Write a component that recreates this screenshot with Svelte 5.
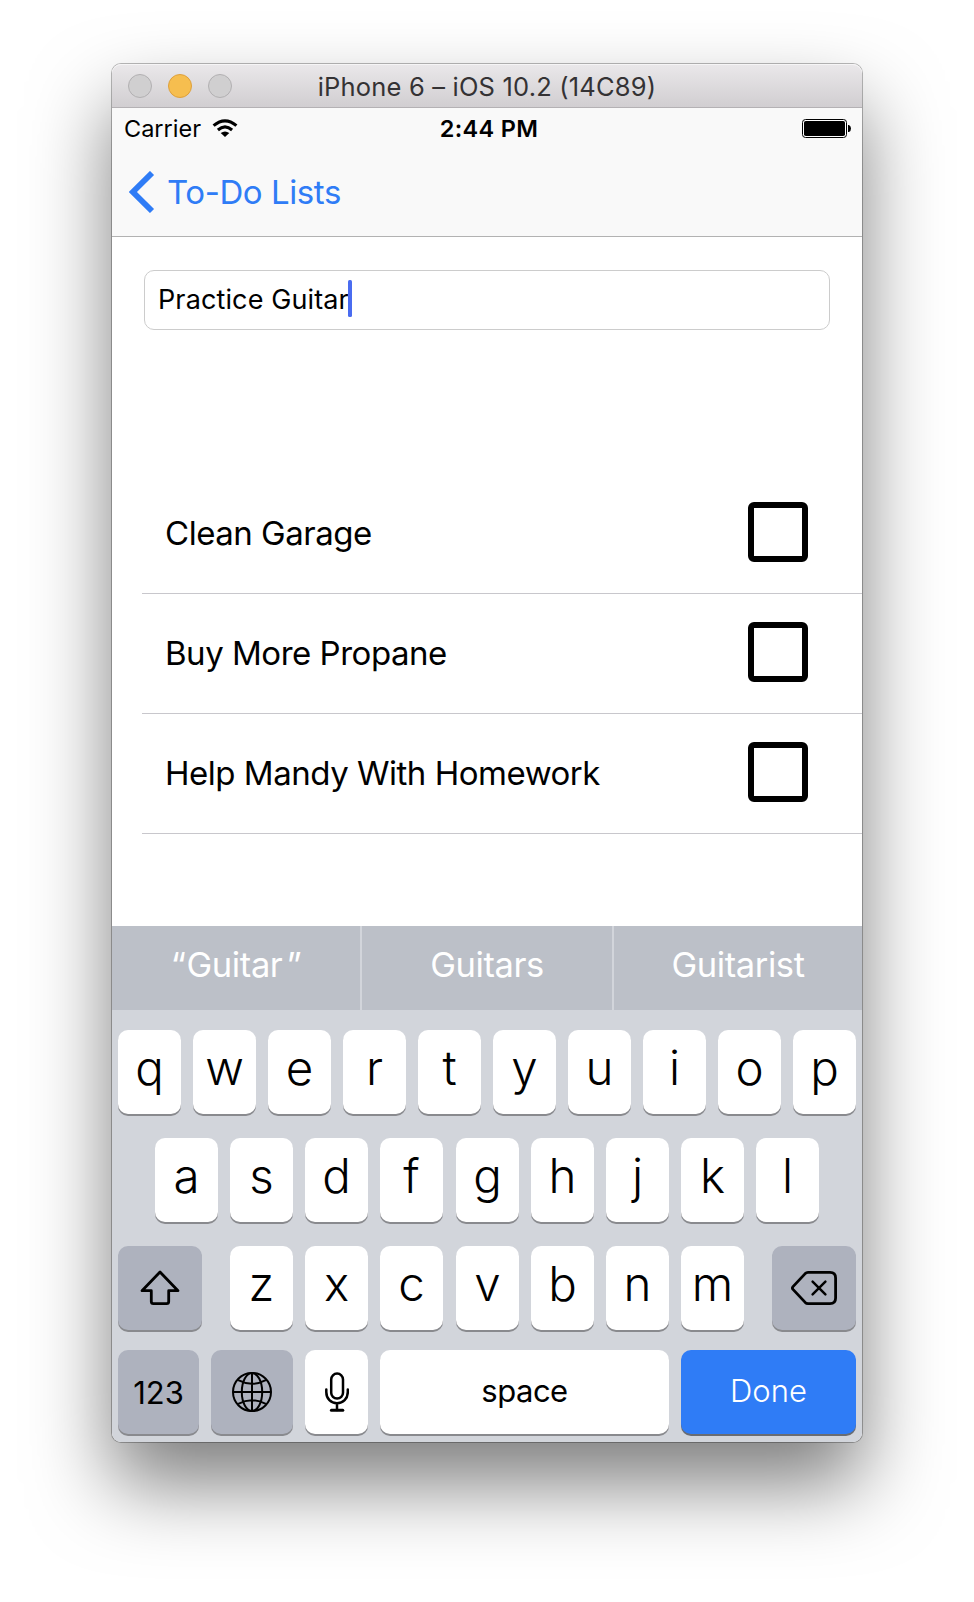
<script>
  const items = ['Clean Garage', 'Buy More Propane', 'Help Mandy With Homework'];
  const top = [...'qwertyuiop'];
  const home = [...'asdfghjkl'];
  const bottom = [...'zxcvbnm'];
</script>

<div class="stage">
  <main class="window">
    <header class="titlebar">
      <div class="lights"><i></i><i class="amber"></i><i></i></div>
      <span class="title">iPhone 6 – iOS 10.2 (14C89)</span>
    </header>

    <section class="top">
      <div class="status">
        <div class="carrier">
          <span>Carrier</span>
          <svg width="26" height="19" viewBox="0 0 26 19" fill="none" stroke="#000">
            <path d="M1.6 6.6 Q13 -3 24.4 6.6" stroke-width="3.2" />
            <path d="M5.9 11 Q13 4.8 20.1 11" stroke-width="3.1" />
            <path d="M13 18 L8.7 14.1 Q13 10.8 17.3 14.1 Z" fill="#000" stroke="none" />
          </svg>
        </div>
        <span class="time">2:44 PM</span>
        <svg class="battery" width="49" height="19" viewBox="0 0 49 19">
          <rect x=".5" y=".5" width="44" height="18" rx="3" fill="#fff" stroke="#000" />
          <rect x="2" y="2" width="41" height="15" rx="1.8" />
          <path d="M46 6 h1 q2 1 2 3.5 t-2 3.5 h-1z" />
        </svg>
      </div>
      <nav>
        <svg width="26" height="42" viewBox="0 0 26 42" fill="none" stroke="#2f7cf6" stroke-width="5.8">
          <path d="M23 2 L3.9 21 L23 40" />
        </svg>
        <span>To-Do Lists</span>
      </nav>
    </section>

    <section class="content">
      <div class="field"><span>Practice Guitar</span><i class="caret"></i></div>
      <ul>
        {#each items as item}
          <li><span class="item">{item}</span><i class="box"></i></li>
        {/each}
      </ul>
    </section>

    <section class="keyboard">
      <div class="suggestions">
        <div><span class="open">“</span><span>Guitar</span><span class="close">”</span></div>
        <div>Guitars</div>
        <div>Guitarist</div>
      </div>
      <div class="row r1">{#each top as k}<b class="key">{k}</b>{/each}</div>
      <div class="row r2">{#each home as k}<b class="key {k}">{k}</b>{/each}</div>
      <div class="row r3">
        <b class="key dark shift">
          <svg width="40" height="36" viewBox="0 0 40 36" fill="none" stroke="#000" stroke-width="2.8" stroke-linejoin="round">
            <path d="M20 2 L2 20.7 H11.3 V31.5 Q11.3 33.6 13.4 33.6 H26.6 Q28.7 33.6 28.7 31.5 V20.7 H38 Z" />
          </svg>
        </b>
        {#each bottom as k}<b class="key {k}">{k}</b>{/each}
        <b class="key dark del">
          <svg width="46" height="34" viewBox="0 0 46 34" fill="none" stroke="#000" stroke-width="2.8" stroke-linejoin="round" stroke-linecap="round">
            <path d="M17 1.4 H39 Q44.6 1.4 44.6 7 V27 Q44.6 32.6 39 32.6 H17 Q15.4 32.6 14.2 31.4 L2 18.4 Q.8 17 2 15.6 L14.2 2.6 Q15.4 1.4 17 1.4 Z" />
            <path d="M21.6 10.6 L34.4 23.4 M34.4 10.6 L21.6 23.4" stroke-width="2.5" />
          </svg>
        </b>
      </div>
      <div class="row r4">
        <b class="key dark num">123</b>
        <b class="key dark globe">
          <svg width="40" height="40" viewBox="0 0 40 40" fill="none" stroke="#000" stroke-width="2">
            <circle cx="20" cy="20" r="19" />
            <ellipse cx="20" cy="20" rx="10.2" ry="19" />
            <path d="M20 1 V39 M1 20 H39 M6.2 8.2 Q20 15.4 33.8 8.2 M6.2 31.8 Q20 24.6 33.8 31.8" />
          </svg>
        </b>
        <b class="key mic">
          <svg width="24" height="40" viewBox="0 0 24 40" fill="none" stroke="#000" stroke-width="2.5" stroke-linecap="round">
            <rect x="6.2" y="1.6" width="11.8" height="25" rx="5.9" />
            <path d="M1.3 17.5 V20 C1.3 27 6 31.2 12 31.2 S22.8 27 22.8 20 V17.5 M12 31.2 V38" />
            <path d="M6.4 38.3 H17.8" stroke-width="3" />
          </svg>
        </b>
        <b class="key space">space</b>
        <b class="key done">Done</b>
      </div>
    </section>
  </main>
</div>

<style>
  :global(body) { margin: 0; background: #fff; }
  .stage {
    width: 974px; height: 1602px; box-sizing: border-box; padding: 64px 112px 0;
    overflow: hidden; font-family: Inter, "Liberation Sans", sans-serif; color: #000;
  }
  .window {
    width: 750px; height: 1378px; border-radius: 9px; display: flex; flex-direction: column;
    background: #fff;
    box-shadow: 0 0 0 1px rgba(0, 0, 0, .27), 0 42px 80px rgba(0, 0, 0, .51);
  }
  i, b { font-style: normal; font-weight: 400; display: block; }
  span { white-space: nowrap; }
  svg { display: block; flex: none; }

  .titlebar {
    height: 44px; box-sizing: border-box; border-radius: 9px 9px 0 0; flex: none;
    background: linear-gradient(#eae8ea, #d1ced1); border-bottom: 1px solid #b4b1b4;
    box-shadow: inset 0 1px #f6f5f6;
    display: grid; grid-template-columns: 1fr auto 1fr; align-items: center; padding: 0 16px;
  }
  .lights { display: flex; gap: 16px; padding-top: 1px; }
  .lights i { width: 24px; height: 24px; border-radius: 50%; box-sizing: border-box; background: #d0cfd0; border: 1px solid #b2b0b2; }
  .lights i.amber { background: #f6be4f; border-color: #dea03c; }
  .title { font-size: 25.5px; letter-spacing: .18px; color: #343234; padding-top: 2px; }

  .top { height: 129px; box-sizing: border-box; border-bottom: 1px solid #b2b2b2; background: #f9f9f9; flex: none; }
  .status { height: 40px; display: grid; grid-template-columns: 1fr auto 1fr; align-items: center; padding: 0 11px 0 12px; font-size: 23.5px; }
  .carrier { display: flex; gap: 11px; align-items: center; }
  .status .time { font-weight: 600; letter-spacing: .3px; padding-left: 3px; }
  .status span { padding-top: 1px; }
  .battery { justify-self: end; margin-top: 1px; }
  nav { height: 88px; display: flex; align-items: center; padding-left: 17px; gap: 12px; font-size: 33px; letter-spacing: -.42px; color: #2f7cf6; }

  .content { height: 689px; flex: none; }
  .field {
    height: 60px; box-sizing: border-box; margin: 33px 32px 0; border: 1px solid #ccc; border-radius: 10px;
    display: flex; align-items: center; padding-left: 13px; font-size: 27px; letter-spacing: .12px;
  }
  .field span { padding-bottom: 2px; }
  .caret { width: 4px; height: 37px; border-radius: 1.5px; background: #4a6cf0; margin: -3px 0 0 -1px; }
  ul { list-style: none; margin: 144px 0 0; padding: 0 0 0 30px; }
  li { height: 120px; box-sizing: border-box; border-bottom: 1px solid #c8c7cc; display: flex; justify-content: space-between; align-items: center; padding: 0 54px 3px 23px; font-size: 33px; letter-spacing: -.48px; }
  .item { padding-top: 2px; }
  .box { width: 60px; height: 60px; box-sizing: border-box; border: 6.5px solid #000; border-radius: 6px; }

  .keyboard { flex: 1; background: #d2d5db; border-radius: 0 0 9px 9px; }
  .suggestions { height: 84px; display: grid; grid-template-columns: 248px 250px 248px; gap: 2px; color: #fff; font-size: 34.5px; letter-spacing: -.4px; }
  .suggestions div { background: #bcc0c8; display: flex; align-items: center; justify-content: center; padding-bottom: 8px; box-sizing: border-box; }
  .open { margin-right: 1px; }
  .close { margin-left: 4px; }
  .row { display: flex; gap: 12px; padding: 0 6px; height: 84px; }
  .r1 { margin-top: 20px; }
  .r2 { margin-top: 24px; padding-left: 43px; }
  .r3 { margin-top: 24px; }
  .r4 { margin-top: 20px; }
  .key {
    width: 63px; height: 84px; box-sizing: border-box; flex: none; border-radius: 10px; background: #fff;
    box-shadow: 0 2px #898a8e; display: flex; align-items: center; justify-content: center;
    font-size: 47.5px; font-weight: 300; padding-bottom: 9px;
  }
  .key.g, .key.v { margin-left: 1px; }
  .key.dark { background: #aeb2be; }
  .shift { width: 84px; padding-bottom: 0; margin-right: 16px; }
  .del { width: 84px; padding: 0; margin-left: 16px; }
  .num { width: 81px; font-size: 31px; font-weight: 400; padding: 0; }
  .globe { width: 82px; padding: 0; }
  .mic { padding: 0; }
  .space { width: 289px; font-size: 31px; font-weight: 400; letter-spacing: -.5px; padding-bottom: 3px; }
  .done { width: 175px; font-size: 31px; font-weight: 300; padding-bottom: 3px; background: #2f7cf6; color: #fff; box-shadow: 0 2px #696c72; }
</style>
